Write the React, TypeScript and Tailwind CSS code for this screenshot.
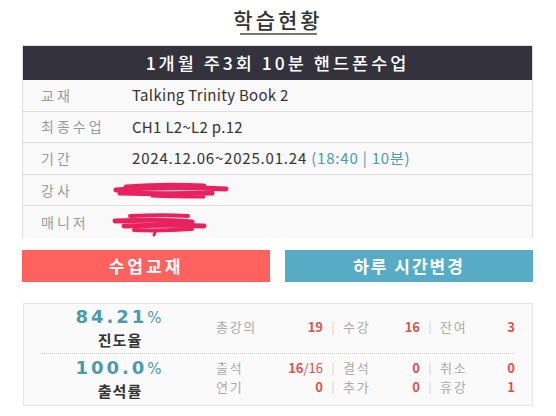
import React from 'react';

const rows = [
  { label: '교재', value: 'Talking Trinity Book 2' },
  { label: '최종수업', value: 'CH1 L2~L2 p.12' },
  { label: '기간', value: 'date' },
  { label: '강사', value: 'mark1' },
  { label: '매니저', value: 'mark2' },
];

function Mark1() {
  return (
    <svg width="120" height="18" viewBox="0 0 120 18" className="block">
      <g stroke="#e8215f" strokeLinecap="round" fill="none">
        <path d="M4 8 C30 6 70 5 114 7" strokeWidth="5" />
        <path d="M14 5 C40 3 70 3 92 4" strokeWidth="5" />
        <path d="M8 11 C40 12 70 12 100 11" strokeWidth="5" />
        <path d="M40 14 C60 15 80 15 92 15" strokeWidth="3" />
      </g>
    </svg>
  );
}

function Mark2() {
  return (
    <svg width="100" height="24" viewBox="0 0 100 24" className="block">
      <g stroke="#e8215f" strokeLinecap="round" fill="none">
        <path d="M18 3 C40 2 60 2 76 3" strokeWidth="4" />
        <path d="M3 8 C30 7 60 7 80 9" strokeWidth="5" />
        <path d="M12 13 C40 12 70 12 92 13" strokeWidth="5" />
        <path d="M22 17 C45 18 65 17 80 16" strokeWidth="4" />
        <path d="M44 17 L42 22" strokeWidth="3" />
      </g>
    </svg>
  );
}

function Stat({ label, value, width, sub }: { label: string; value: string; width: string; sub?: string }) {
  return (
    <div className={`flex justify-between leading-[19px] ${width}`}>
      <span className="text-[#aaa] tracking-[1.7px]">{label}</span>
      <span className="text-[#d9534f] font-semibold">
        {value}
        {sub && <span className="font-normal">{sub}</span>}
      </span>
    </div>
  );
}

function Sep() {
  return <span className="w-[20px] text-center text-[#ccc] text-[11px] leading-[19px]">|</span>;
}

function Rate({ value, label }: { value: string; label: string }) {
  return (
    <div className="w-[160px] flex flex-col items-center">
      <div className="font-['DejaVu_Sans',sans-serif] text-[#4b9aae] text-[18px] font-bold tracking-[3px] leading-[21px]">
        {value}
        <span className="text-[15px] font-normal">%</span>
      </div>
      <div className="text-[15px] font-semibold tracking-[1px] leading-[22px] text-[#333]">{label}</div>
    </div>
  );
}

export default function App() {
  return (
    <div className="w-[556px] h-[416px] overflow-hidden bg-white font-['Noto_Sans_CJK_KR',sans-serif] text-[#333]">
      <div className="pt-[6px] flex flex-col items-center">
        <h1 className="text-[21px] font-medium tracking-[3px] leading-[26px] text-[#333]">학습현황</h1>
        <div className="mt-[1px] w-[77px] h-[2px] bg-[#777]" />
      </div>

      <div className="mt-[10px] ml-[22px] w-[511px] border border-b-0 border-[#ddd]">
        <div className="h-[34px] bg-[#33323d] text-white text-[17.5px] font-medium tracking-[3px] flex items-center justify-center">
          1개월 주3회 10분 핸드폰수업
        </div>
        {rows.map((r, i) => (
          <div
            key={r.label}
            className={`h-[31.6px] flex items-center bg-[#f9f9f9] ${i < rows.length - 1 ? 'border-b border-[#ddd]' : ''}`}
          >
            <span className="w-[109px] pl-[18px] text-[14px] text-[#999] tracking-[3px]">{r.label}</span>
            {r.value === 'date' ? (
              <span className="text-[15px] tracking-[0.8px]">
                2024.12.06~2025.01.24 <span className="text-[#4b9aae]">(18:40 | 10분)</span>
              </span>
            ) : r.value === 'mark1' ? (
              <span className="-ml-[20px] mt-[1px]"><Mark1 /></span>
            ) : r.value === 'mark2' ? (
              <span className="-ml-[20px] mt-[6px]"><Mark2 /></span>
            ) : (
              <span className="text-[15px] tracking-[0.3px]">{r.value}</span>
            )}
          </div>
        ))}
      </div>

      <div className="mt-[12px] ml-[22px] w-[511px] flex gap-[15px]">
        <button className="flex-1 h-[32px] bg-[#fd625e] text-white text-[17px] font-bold tracking-[3px]">수업교재</button>
        <button className="flex-1 h-[32px] bg-[#57abc5] text-white text-[17px] font-bold tracking-[2px]">하루 시간변경</button>
      </div>

      <div className="mt-[21px] ml-[23px] w-[510px] h-[103px] border border-[#e6e6e6] bg-[#fafafa] px-[17px]">
        <div className="h-[50px] flex items-center border-b border-dotted border-[#ccc]">
          <Rate value="84.21" label="진도율" />
          <div className="ml-[17px] flex items-center text-[13px] mt-[-4px]">
            <Stat label="총강의" value="19" width="w-[107px]" />
            <Sep />
            <Stat label="수강" value="16" width="w-[77px]" />
            <Sep />
            <Stat label="잔여" value="3" width="w-[75px]" />
          </div>
        </div>
        <div className="h-[51px] flex items-center">
          <Rate value="100.0" label="출석률" />
          <div className="ml-[17px] flex flex-col text-[13px] mt-[-4px]">
            <div className="flex items-center h-[19px]">
              <Stat label="출석" value="16" sub="/16" width="w-[107px]" />
              <Sep />
              <Stat label="결석" value="0" width="w-[77px]" />
              <Sep />
              <Stat label="취소" value="0" width="w-[75px]" />
            </div>
            <div className="flex items-center h-[19px]">
              <Stat label="연기" value="0" width="w-[107px]" />
              <Sep />
              <Stat label="추가" value="0" width="w-[77px]" />
              <Sep />
              <Stat label="휴강" value="1" width="w-[75px]" />
            </div>
          </div>
        </div>
      </div>
    </div>
  );
}
